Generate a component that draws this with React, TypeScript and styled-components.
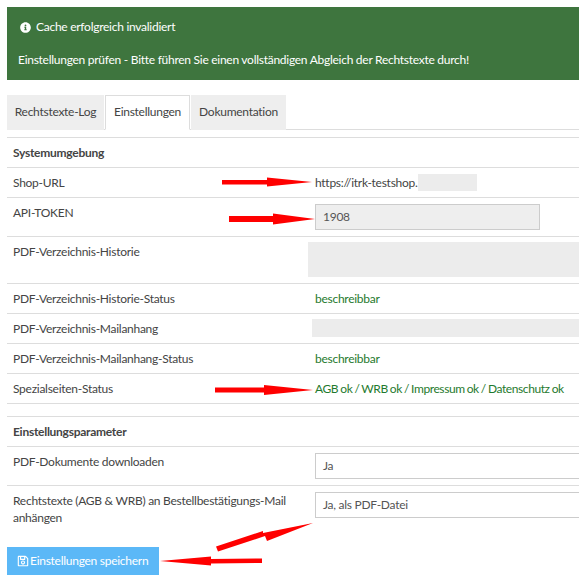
import { createGlobalStyle, styled } from "styled-components";
import { FaInfoCircle, FaRegSave } from "react-icons/fa";

const GlobalStyle = createGlobalStyle`
  html, body {
    margin: 0;
    padding: 0;
    background: #fff;
  }
  body {
    font-family: "Lato", "Noto Sans", sans-serif;
    font-size: 12px;
    letter-spacing: -0.27px;
    color: #444;
  }
`;

const Page = styled.div`
  position: relative;
  width: 579px;
  height: 580px;
  overflow: hidden;
  box-sizing: border-box;
  padding: 7px 0 0 7px;
`;

const Alert = styled.div`
  height: 73px;
  box-sizing: border-box;
  padding: 12px 11px;
  background: #3e753e;
  color: #fff;
`;

const AlertTitle = styled.div`
  display: flex;
  align-items: center;
  gap: 5px;
  height: 16px;
  padding-left: 2px;
  line-height: 16px;
  svg {
    width: 11px;
    height: 11px;
  }
`;

const AlertText = styled.div`
  margin-top: 17px;
  line-height: 16px;
`;

const Tabs = styled.div`
  display: flex;
  gap: 1px;
  height: 35px;
  margin-top: 15px;
  box-sizing: border-box;
  border-bottom: 1px solid #ddd;
`;

const Tab = styled.div<{ $active?: boolean; $width: number }>`
  width: ${(p) => p.$width}px;
  height: 35px;
  box-sizing: border-box;
  text-align: center;
  line-height: 32px;
  background: ${(p) => (p.$active ? "#fff" : "#eee")};
  border: 1px solid ${(p) => (p.$active ? "#ddd" : "#eee")};
  border-bottom-color: ${(p) => (p.$active ? "#fff" : "#eee")};
`;

const Table = styled.div`
  margin-top: 7px;
  border-top: 1px solid #ddd;
`;

const Row = styled.div<{ $height: number; $noBorder?: boolean }>`
  display: grid;
  grid-template-columns: 302px 1fr;
  box-sizing: border-box;
  height: ${(p) => p.$height}px;
  border-bottom: ${(p) => (p.$noBorder ? "none" : "1px solid #ddd")};
`;

const SectionGap = styled.div`
  height: 12px;
  border-bottom: 1px solid #ddd;
`;

const Label = styled.div`
  padding: 6px;
  line-height: 17px;
`;

const Heading = styled(Label)`
  font-weight: 700;
`;

const Value = styled.div<{ $ok?: boolean }>`
  display: flex;
  align-items: flex-start;
  min-width: 0;
  padding: 6px 0 0 6px;
  line-height: 17px;
  white-space: pre;
  color: ${(p) => (p.$ok ? "#1f7a2e" : "#444")};
`;

const StatusList = styled(Value)`
  letter-spacing: -0.41px;
  word-spacing: -0.6px;
`;

const Redacted = styled.div<{ $inset: number; $width: number; $height: number; $top: number }>`
  flex: none;
  width: ${(p) => p.$width}px;
  height: ${(p) => p.$height}px;
  margin-left: ${(p) => p.$inset}px;
  margin-top: ${(p) => p.$top}px;
  background: #ececec;
`;

const Field = styled.div<{ $disabled?: boolean; $width: number }>`
  flex: none;
  box-sizing: border-box;
  width: ${(p) => p.$width}px;
  height: 26px;
  padding: 0 7px;
  line-height: 24px;
  background: ${(p) => (p.$disabled ? "#eee" : "#fff")};
  border: 1px solid #ccc;
  color: #555;
`;

const Save = styled.button`
  display: flex;
  align-items: center;
  gap: 1px;
  width: 152px;
  height: 28px;
  margin-top: 11px;
  padding: 0 0 1px 10px;
  border: none;
  background: #5bb8f7;
  color: #fff;
  font: inherit;
  letter-spacing: inherit;
  white-space: nowrap;
  svg {
    width: 12px;
    height: 12px;
  }
`;

const Arrows = styled.svg`
  position: absolute;
  top: 0;
  left: 0;
  pointer-events: none;
`;

export default function App() {
  return (
    <Page>
      <GlobalStyle />
      <Alert>
        <AlertTitle>
          <FaInfoCircle />
          Cache erfolgreich invalidiert
        </AlertTitle>
        <AlertText>Einstellungen prüfen - Bitte führen Sie einen vollständigen Abgleich der Rechtstexte durch!</AlertText>
      </Alert>

      <Tabs>
        <Tab $width={97}>Rechtstexte-Log</Tab>
        <Tab $width={85} $active>Einstellungen</Tab>
        <Tab $width={95}>Dokumentation</Tab>
      </Tabs>

      <Table>
        <Row $height={30}>
          <Heading>Systemumgebung</Heading>
        </Row>
        <Row $height={30}>
          <Label>Shop-URL</Label>
          <Value>
            https://itrk-testshop.
            <Redacted $inset={0} $width={59} $height={17} $top={0} />
          </Value>
        </Row>
        <Row $height={39}>
          <Label>API-TOKEN</Label>
          <Value>
            <Field $disabled $width={225}>1908</Field>
          </Value>
        </Row>
        <Row $height={47}>
          <Label>PDF-Verzeichnis-Historie</Label>
          <Value>
            <Redacted $inset={-7} $width={271} $height={35} $top={-1} />
          </Value>
        </Row>
        <Row $height={30}>
          <Label>PDF-Verzeichnis-Historie-Status</Label>
          <Value $ok>beschreibbar</Value>
        </Row>
        <Row $height={30}>
          <Label>PDF-Verzeichnis-Mailanhang</Label>
          <Value>
            <Redacted $inset={-3} $width={267} $height={18} $top={-1} />
          </Value>
        </Row>
        <Row $height={30}>
          <Label>PDF-Verzeichnis-Mailanhang-Status</Label>
          <Value $ok>beschreibbar</Value>
        </Row>
        <Row $height={30}>
          <Label>Spezialseiten-Status</Label>
          <StatusList $ok>AGB ok / WRB ok / Impressum ok / Datenschutz ok</StatusList>
        </Row>
        <SectionGap />
        <Row $height={30}>
          <Heading>Einstellungsparameter</Heading>
        </Row>
        <Row $height={39}>
          <Label>PDF-Dokumente downloaden</Label>
          <Value>
            <Field $width={270}>Ja</Field>
          </Value>
        </Row>
        <Row $height={50} $noBorder>
          <Label>Rechtstexte (AGB &amp; WRB) an Bestellbestätigungs-Mail anhängen</Label>
          <Value>
            <Field $width={270}>Ja, als PDF-Datei</Field>
          </Value>
        </Row>
      </Table>

      <Save>
        <FaRegSave />
        Einstellungen speichern
      </Save>

      <Arrows width="579" height="580" viewBox="0 0 579 580" fill="#f00">
        <polygon points="222,180 267,180 267,177.500 312,182 267,186.500 267,184.500 222,184.500" />
        <polygon points="229,216 273,216 273,213.500 315,219 273,224.500 273,222 229,222" />
        <polygon points="215,387.500 264,387.500 264,385 313,390 264,395 264,392.500 215,392.500" />
        <polygon points="160,561 211,556.500 211,559 262,558.500 262,563 211,563.500 211,565.500" />
        <polygon points="313,523 267,541 265,536 218,551.500 216,546.500 263,531 263,533" />
      </Arrows>
    </Page>
  );
}
